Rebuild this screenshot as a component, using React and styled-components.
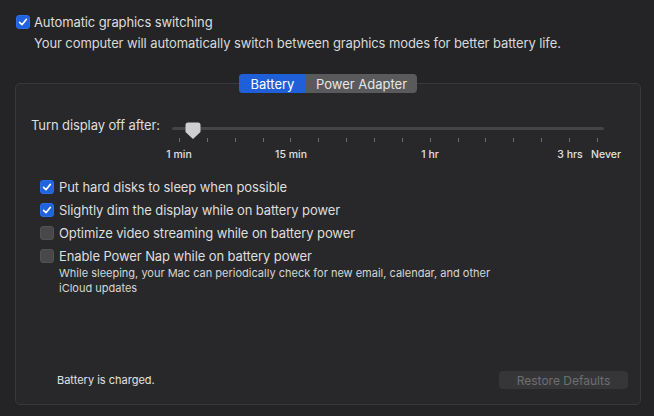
import React from 'react';
import styled, { createGlobalStyle } from 'styled-components';

const GlobalStyle = createGlobalStyle`
  html, body {
    margin: 0;
    background: #242426;
  }
  body {
    font-family: Inter, "Noto Sans", sans-serif;
    color: #dedede;
    -webkit-font-smoothing: antialiased;
  }
`;

const Page = styled.div`
  width: 654px;
  height: 416px;
  box-sizing: border-box;
  padding: 14px 13px 11px 15px;
  display: flex;
  flex-direction: column;
`;

const TopOption = styled.div`
  display: flex;
  align-items: center;
  gap: 4px;
  padding-left: 1px;
  font-size: 13px;
  line-height: 16px;
  letter-spacing: -0.1px;
`;

const TopDesc = styled.div`
  margin-top: 5px;
  padding-left: 19px;
  font-size: 13px;
  line-height: 16px;
  letter-spacing: -0.1px;
  color: #d9d9d9;
`;

const Panel = styled.div`
  margin-top: 32px;
  flex: 1;
  display: flex;
  flex-direction: column;
  background: #28282a;
  border: 1px solid #38383a;
  border-radius: 5px;
`;

const Segmented = styled.div`
  align-self: center;
  margin-top: -10px;
  display: flex;
  height: 19px;
  border-radius: 4px;
  overflow: hidden;
  background: #5a5a5c;
`;

const Segment = styled.div`
  width: ${({ w }) => w}px;
  display: flex;
  align-items: center;
  justify-content: center;
  font-size: 13px;
  color: ${({ active }) => (active ? '#ffffff' : '#e6e6e6')};
  background: ${({ active }) => (active ? '#1f5fd8' : 'transparent')};
`;

const SliderRow = styled.div`
  margin-top: 24px;
  padding-left: 15px;
  display: flex;
  align-items: flex-start;
`;

const SliderLabel = styled.div`
  width: 134px;
  flex: none;
  font-size: 13px;
  line-height: 16px;
  letter-spacing: -0.1px;
`;

const Scale = styled.div`
  position: relative;
  margin-top: 3px;
  width: 460px;
  height: 40px;
`;

const Track = styled.div`
  margin: 7px 0 0 7px;
  width: 432px;
  height: 3px;
  border-radius: 2px;
  background: #454547;
`;

const TickRow = styled.div`
  margin: 8px 0 0 14px;
  width: 419px;
  display: flex;
  justify-content: space-between;
`;

const Tick = styled.div`
  width: 1px;
  height: 4px;
  background: #6c6c6e;
`;

const Knob = styled.svg`
  position: absolute;
  left: 20px;
  top: 2px;
`;

const TickLabel = styled.div`
  position: absolute;
  top: 29px;
  transform: translateX(-50%);
  font-size: 10.5px;
  line-height: 12px;
  font-weight: 500;
  white-space: nowrap;
  color: #e0e0e0;
`;

const CheckList = styled.div`
  margin-top: 15px;
  padding-left: 24px;
  display: flex;
  flex-direction: column;
`;

const OptionRow = styled.div`
  height: 23px;
  display: flex;
  align-items: center;
  gap: 5px;
  font-size: 13px;
  letter-spacing: -0.1px;
`;

const SubText = styled.div`
  margin-top: -1px;
  padding-left: 19px;
  width: 450px;
  font-size: 11px;
  line-height: 15px;
  color: #d6d6d6;
`;

const Box = styled.span`
  width: 14px;
  height: 14px;
  flex: none;
  box-sizing: border-box;
  border-radius: 3px;
  display: inline-flex;
  align-items: center;
  justify-content: center;
  background: ${({ checked }) => (checked ? '#1f63de' : '#48484a')};
  border: 1px solid ${({ checked }) => (checked ? '#2b6ee6' : '#525254')};
`;

const Footer = styled.div`
  margin-top: auto;
  padding: 0 12px 15px 41px;
  display: flex;
  align-items: center;
  justify-content: space-between;
`;

const Status = styled.div`
  font-size: 11px;
  line-height: 14px;
  color: #e2e2e2;
`;

const RestoreButton = styled.button`
  width: 129px;
  height: 18px;
  border: none;
  border-radius: 4px;
  background: #363638;
  color: #6e6e70;
  font-family: inherit;
  font-size: 12px;
  padding: 0;
`;

const Checkbox = ({ checked }) => (
  <Box checked={checked}>
    {checked && (
      <svg width="10" height="10" viewBox="0 0 10 10">
        <path d="M1.6 5.3 L4 7.7 L8.4 2.3" fill="none" stroke="#fff" strokeWidth="1.7" strokeLinecap="round" strokeLinejoin="round" />
      </svg>
    )}
  </Box>
);

const labels = [
  { text: '1 min', x: 14 },
  { text: '15 min', x: 126 },
  { text: '1 hr', x: 265 },
  { text: '3 hrs', x: 405 },
  { text: 'Never', x: 441 },
];

const options = [
  { text: 'Put hard disks to sleep when possible', checked: true },
  { text: 'Slightly dim the display while on battery power', checked: true },
  { text: 'Optimize video streaming while on battery power', checked: false },
  { text: 'Enable Power Nap while on battery power', checked: false },
];

export default function App() {
  return (
    <>
      <GlobalStyle />
      <Page>
        <TopOption>
          <Checkbox checked />
          <span>Automatic graphics switching</span>
        </TopOption>
        <TopDesc>Your computer will automatically switch between graphics modes for better battery life.</TopDesc>
        <Panel>
          <Segmented>
            <Segment w={67} active>Battery</Segment>
            <Segment w={111}>Power Adapter</Segment>
          </Segmented>
          <SliderRow>
            <SliderLabel>Turn display off after:</SliderLabel>
            <Scale>
              <Track />
              <TickRow>
                {Array.from({ length: 16 }).map((_, i) => (
                  <Tick key={i} />
                ))}
              </TickRow>
              <Knob width="16" height="18" viewBox="0 0 16 18">
                <path d="M3 0.5 H13 A2.5 2.5 0 0 1 15.5 3 V10 L8 17 L0.5 10 V3 A2.5 2.5 0 0 1 3 0.5 Z" fill="#cfcfd1" />
              </Knob>
              {labels.map((l) => (
                <TickLabel key={l.text} style={{ left: l.x }}>{l.text}</TickLabel>
              ))}
            </Scale>
          </SliderRow>
          <CheckList>
            {options.map((o) => (
              <OptionRow key={o.text}>
                <Checkbox checked={o.checked} />
                <span>{o.text}</span>
              </OptionRow>
            ))}
            <SubText>
              While sleeping, your Mac can periodically check for new email, calendar, and other iCloud updates
            </SubText>
          </CheckList>
          <Footer>
            <Status>Battery is charged.</Status>
            <RestoreButton>Restore Defaults</RestoreButton>
          </Footer>
        </Panel>
      </Page>
    </>
  );
}
